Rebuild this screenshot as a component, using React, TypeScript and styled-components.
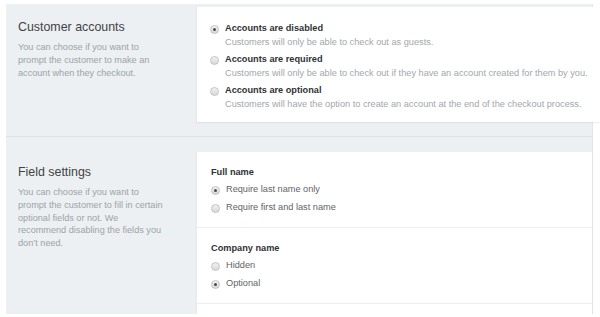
import styled, { createGlobalStyle } from "styled-components";

const GlobalStyle = createGlobalStyle`
  html, body {
    margin: 0;
    background: #ffffff;
    font-family: "Liberation Sans", Arial, Helvetica, sans-serif;
  }
`;

const Page = styled.div`
  margin: 4px 7px 0 6px;
  background: #edf0f2;
  border-right: 1px solid #e3e6e8;
`;

const Section = styled.section<{ $top: number; $bottom: number; $last?: boolean }>`
  display: grid;
  grid-template-columns: 190px 1fr;
  padding-top: ${({ $top }) => $top}px;
  padding-bottom: ${({ $bottom }) => $bottom}px;
  border-bottom: ${({ $last }) => ($last ? "none" : "1px solid #dfe3e6")};
`;

const Intro = styled.div`
  padding: 13px 20px 0 12px;
`;

const Heading = styled.h2`
  margin: 0 0 6px;
  font-size: 12.4px;
  line-height: 15px;
  font-weight: normal;
  color: #3e4346;
`;

const Description = styled.p`
  margin: 0;
  width: 150px;
  font-size: 9.15px;
  line-height: 12.8px;
  color: #9ba3a8;
`;

const Card = styled.div<{ $pad: string }>`
  background: #ffffff;
  padding: ${({ $pad }) => $pad};
  box-shadow: 0 1px 1px rgba(0, 0, 0, 0.06);
  border-left: 1px solid #e8eaec;
`;

const OptionList = styled.div`
  display: flex;
  flex-direction: column;
  gap: 4px;
`;

const Row = styled.label`
  display: flex;
  align-items: flex-start;
  gap: 6px;
`;

const Radio = styled.span<{ $checked?: boolean }>`
  flex: none;
  position: relative;
  width: 7px;
  height: 7px;
  margin-top: 2.5px;
  border-radius: 50%;
  border: 0.6px solid #bfc2c5;
  background: linear-gradient(#f2f2f2, #d8d8d8);
  &::after {
    content: "";
    display: ${({ $checked }) => ($checked ? "block" : "none")};
    position: absolute;
    left: 2px;
    top: 2px;
    width: 3px;
    height: 3px;
    border-radius: 50%;
    background: #4a4a4a;
  }
`;

const OptionText = styled.div`
  display: flex;
  flex-direction: column;
  gap: 1px;
`;

const Label = styled.span`
  font-size: 9.2px;
  line-height: 13px;
  font-weight: bold;
  color: #2f3336;
`;

const Hint = styled.span`
  font-size: 9.2px;
  line-height: 13px;
  color: #a2a7ab;
  white-space: nowrap;
`;

const Group = styled.div`
  padding: 14px 14px 13px 14px;
  border-bottom: 1px solid #eceeef;
`;

const GroupTitle = styled.div`
  margin-bottom: 4px;
  font-size: 9.2px;
  line-height: 13px;
  font-weight: bold;
  color: #2f3336;
`;

const Choices = styled.div`
  display: flex;
  flex-direction: column;
  gap: 5px;
`;

const Choice = styled.span`
  font-size: 9.2px;
  line-height: 13px;
  color: #5f6366;
`;

const accountOptions = [
  {
    label: "Accounts are disabled",
    hint: "Customers will only be able to check out as guests.",
    checked: true,
  },
  {
    label: "Accounts are required",
    hint: "Customers will only be able to check out if they have an account created for them by you.",
  },
  {
    label: "Accounts are optional",
    hint: "Customers will have the option to create an account at the end of the checkout process.",
  },
];

const fieldGroups = [
  {
    title: "Full name",
    options: [
      { text: "Require last name only", checked: true },
      { text: "Require first and last name" },
    ],
  },
  {
    title: "Company name",
    options: [{ text: "Hidden" }, { text: "Optional", checked: true }],
  },
];

export default function App() {
  return (
    <>
      <GlobalStyle />
      <Page>
        <Section $top={3} $bottom={14}>
          <Intro>
            <Heading>Customer accounts</Heading>
            <Description>
              You can choose if you want to prompt the customer to make an
              account when they checkout.
            </Description>
          </Intro>
          <Card $pad="15px 14px 11px 13px">
            <OptionList>
              {accountOptions.map((o) => (
                <Row key={o.label}>
                  <Radio $checked={o.checked} />
                  <OptionText>
                    <Label>{o.label}</Label>
                    <Hint>{o.hint}</Hint>
                  </OptionText>
                </Row>
              ))}
            </OptionList>
          </Card>
        </Section>
        <Section $top={15} $bottom={0} $last>
          <Intro>
            <Heading>Field settings</Heading>
            <Description>
              You can choose if you want to prompt the customer to fill in
              certain optional fields or not. We recommend disabling the fields
              you don’t need.
            </Description>
          </Intro>
          <Card $pad="0 0 10px 0">
            {fieldGroups.map((g) => (
              <Group key={g.title}>
                <GroupTitle>{g.title}</GroupTitle>
                <Choices>
                  {g.options.map((c) => (
                    <Row key={c.text}>
                      <Radio $checked={c.checked} />
                      <Choice>{c.text}</Choice>
                    </Row>
                  ))}
                </Choices>
              </Group>
            ))}
          </Card>
        </Section>
      </Page>
    </>
  );
}
